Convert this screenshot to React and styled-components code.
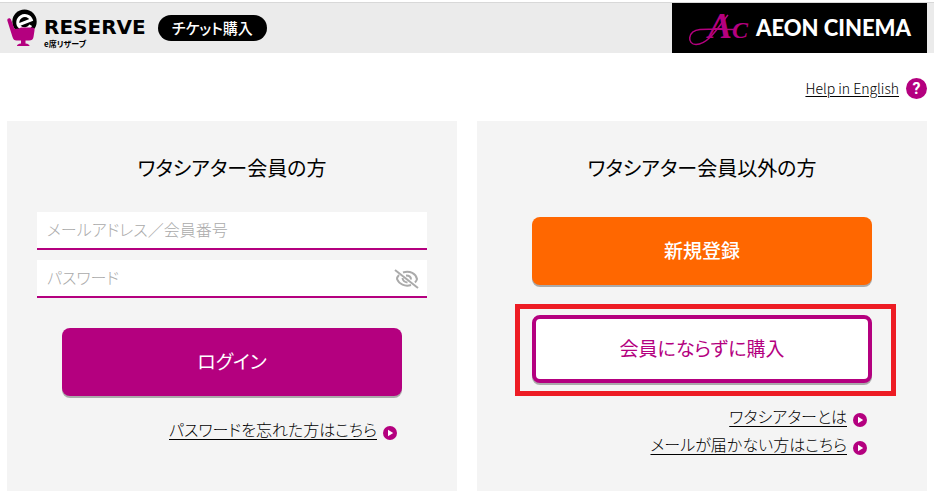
import React from "react";
import styled, { createGlobalStyle, css } from "styled-components";

const MAGENTA = "#b4007f";

const GlobalStyle = createGlobalStyle`
  *, *::before, *::after { box-sizing: border-box; }
  body {
    margin: 0;
    background: #fff;
    color: #000;
    font-family: "Noto Sans CJK JP", sans-serif;
    font-size: 16px;
    font-weight: 300;
    line-height: 28px;
    font-feature-settings: "palt";
  }
`;

const Header = styled.header`
  display: flex;
  justify-content: space-between;
  align-items: stretch;
  margin-top: 2px;
  padding: 0 7px;
  border-top: 1px solid #d8d8d8;
  background: #ebebeb;
`;

const Brand = styled.h1`
  display: flex;
  align-items: center;
  margin: 0;
  height: 50px;
`;

const Wordmark = styled.span`
  display: flex;
  flex-direction: column;
  margin-left: 1px;
  padding-top: 8px;
`;

const WordmarkMain = styled.span`
  font: 700 20px/24px "DejaVu Sans", sans-serif;
`;

const WordmarkSub = styled.span`
  font-size: 8px;
  font-weight: 700;
  line-height: 10px;
`;

const Badge = styled.span`
  margin-left: 12px;
  padding: 0 14px;
  border-radius: 13px;
  background: #000;
  color: #fff;
  font-size: 15px;
  font-weight: 500;
  line-height: 26px;
`;

const CinemaLogo = styled.a`
  display: flex;
  align-items: center;
  padding: 0 16px;
  background: #000;
  color: #fff;
  font: 900 22px/50px Lato, sans-serif;
  text-decoration: none;
`;

const HelpRow = styled.nav`
  display: flex;
  justify-content: flex-end;
  padding: 21px 7px 19px;
`;

const IconLink = styled.a`
  display: flex;
  align-items: center;
  gap: 6px;
  color: #000;
  text-underline-offset: 3px;
  svg { margin-top: 8px; }
`;

const HelpLink = styled.a`
  display: flex;
  align-items: center;
  gap: 7px;
  color: #000;
  font-size: 14px;
  text-decoration: none;
`;

const HelpText = styled.span`
  text-decoration: underline;
  text-underline-offset: 2px;
`;

const HelpIcon = styled.span`
  width: 21px;
  height: 21px;
  border-radius: 50%;
  background: ${MAGENTA};
  color: #fff;
  font: 700 16px/21px Roboto, sans-serif;
  text-align: center;
`;

const Columns = styled.main`
  display: grid;
  grid-template-columns: 1fr 1fr;
  gap: 20px;
  padding: 0 7px 7px;
`;

const Panel = styled.section`
  display: flex;
  flex-direction: column;
  padding: 32px 30px 33px;
  background: #f4f4f4;
`;

const PanelTitle = styled.h2`
  margin: 0;
  font-size: 20px;
  font-weight: 400;
  line-height: 30px;
  text-align: center;
`;

const LoginForm = styled.form`
  display: flex;
  flex-direction: column;
  gap: 10px;
  margin-top: 29px;
`;

const Field = styled.label`
  display: flex;
  align-items: center;
  padding: 0 7px 0 10px;
  border-bottom: 2px solid ${MAGENTA};
  background: #fff;
`;

const FieldInput = styled.input`
  flex: 1;
  min-width: 0;
  height: 36px;
  padding: 0 0 2px;
  border: 0;
  outline: 0;
  background: transparent;
  font: inherit;
  font-feature-settings: inherit;
  &::placeholder { color: #aaa; opacity: 1; }
`;

const EyeButton = styled.button`
  display: flex;
  padding: 2px 0 0;
  border: 0;
  background: none;
  color: #aaa;
`;

const tones = {
  magenta: css`background: ${MAGENTA}; color: #fff; font-weight: 400;`,
  orange: css`background: #ff6700; color: #fff; font-weight: 500;`,
  outline: css`background: #fff; color: ${MAGENTA}; border: 4px solid ${MAGENTA}; font-weight: 400;`,
};

const ActionButton = styled.button`
  align-self: center;
  width: 340px;
  max-width: 100%;
  height: 68px;
  padding: 0 0 4px;
  border: 0;
  border-radius: 8px;
  box-shadow: 0 2px 0 #aaa;
  font-family: inherit;
  font-size: 19px;
  font-feature-settings: inherit;
  ${({ $tone }) => tones[$tone]}
`;

const LoginButton = styled(ActionButton)`
  margin-top: 20px;
`;

const GuestActions = styled.div`
  display: flex;
  flex-direction: column;
  align-items: center;
  gap: 19px;
  margin-top: 34px;
`;

const Highlight = styled.div`
  display: flex;
  justify-content: center;
  align-self: stretch;
  margin: 0 1px 0 8px;
  padding: 6px 19px 8px 12px;
  border: 5px solid #ed1c24;
`;

const LinkList = styled.div`
  display: flex;
  flex-direction: column;
  align-items: flex-end;
  margin-top: ${({ $top }) => $top}px;
  padding-right: 30px;
`;

const ArrowIcon = () => (
  <svg width="14" height="14" viewBox="0 0 14 14" aria-hidden="true">
    <circle cx="7" cy="7" r="7" fill={MAGENTA} />
    <path d="M5 3.8 10.2 7 5 10.2Z" fill="#fff" />
  </svg>
);

const SeatLogo = () => (
  <svg width="36" height="40" viewBox="0 0 36 40" aria-hidden="true">
    <circle cx="17.5" cy="13.700" r="12.200" fill="#000" />
    <g transform="translate(17.500 13.700) rotate(-22)" fill="none" stroke="#fff" strokeWidth="3">
      <path d="M-6 .8H7A7 6.600 0 1 0 4.500 5.600" />
    </g>
    <path d="M.3 12.500C0 10 3.500 9.500 4.200 12L7.500 21 12 20.500 14 19.500H25Q28 19.500 27.500 22.500L26.500 29Q26 32.500 22 32.500H18.500V35.500Q22.500 36 22.500 38H10Q10 36 14 35.500V32.500H9.500Q6.500 32.500 5.500 29Z" fill={MAGENTA} />
  </svg>
);

const AcMark = () => (
  <svg width="68" height="50" viewBox="0 0 68 50" aria-hidden="true">
    <g fill={MAGENTA} fontFamily="Liberation Serif, serif" fontStyle="italic" fontWeight="700">
      <text x="20" y="35" fontSize="36">A</text>
      <text x="44" y="35" fontSize="24">C</text>
    </g>
    <path d="M40 12C31 23 21 41 8 41.500-1 41.500-1 28 12 26.500 17 26 30 26.500 46 26.500" fill="none" stroke={MAGENTA} strokeWidth="1.500" />
  </svg>
);

const EyeOffIcon = () => (
  <svg width="26" height="22" viewBox="0 0 26 22" fill="none" stroke="currentColor" strokeWidth="2" aria-hidden="true">
    <path d="M1 2 24 20" />
    <path d="M9 4.500C16 2 22 6 23 11q-.5 2-2 3.500M5 7q-2 2-2 4c2 5 8 8 14 6" />
    <path d="M12 7.500q5 0 5 4M8.500 10q.5 4 5 4.500" />
  </svg>
);

export default function App() {
  return (
    <>
      <GlobalStyle />
      <Header>
        <Brand>
          <SeatLogo />
          <Wordmark>
            <WordmarkMain>RESERVE</WordmarkMain>
            <WordmarkSub>e席リザーブ</WordmarkSub>
          </Wordmark>
          <Badge>チケット購入</Badge>
        </Brand>
        <CinemaLogo href="#" aria-label="AEON CINEMA">
          <AcMark />
          <span>AEON CINEMA</span>
        </CinemaLogo>
      </Header>
      <HelpRow>
        <HelpLink href="#">
          <HelpText>Help in English</HelpText>
          <HelpIcon>?</HelpIcon>
        </HelpLink>
      </HelpRow>
      <Columns>
        <Panel>
          <PanelTitle>ワタシアター会員の方</PanelTitle>
          <LoginForm onSubmit={(e) => e.preventDefault()}>
            <Field>
              <FieldInput type="text" placeholder="メールアドレス／会員番号" aria-label="メールアドレス／会員番号" />
            </Field>
            <Field>
              <FieldInput type="password" placeholder="パスワード" aria-label="パスワード" />
              <EyeButton type="button" aria-label="パスワードを表示"><EyeOffIcon /></EyeButton>
            </Field>
            <LoginButton $tone="magenta" type="submit">ログイン</LoginButton>
          </LoginForm>
          <LinkList $top={19}>
            <IconLink href="#">パスワードを忘れた方はこちら<ArrowIcon /></IconLink>
          </LinkList>
        </Panel>
        <Panel>
          <PanelTitle>ワタシアター会員以外の方</PanelTitle>
          <GuestActions>
            <ActionButton $tone="orange" type="button">新規登録</ActionButton>
            <Highlight>
              <ActionButton $tone="outline" type="button">会員にならずに購入</ActionButton>
            </Highlight>
          </GuestActions>
          <LinkList $top={6}>
            <IconLink href="#">ワタシアターとは<ArrowIcon /></IconLink>
            <IconLink href="#">メールが届かない方はこちら<ArrowIcon /></IconLink>
          </LinkList>
        </Panel>
      </Columns>
    </>
  );
}
